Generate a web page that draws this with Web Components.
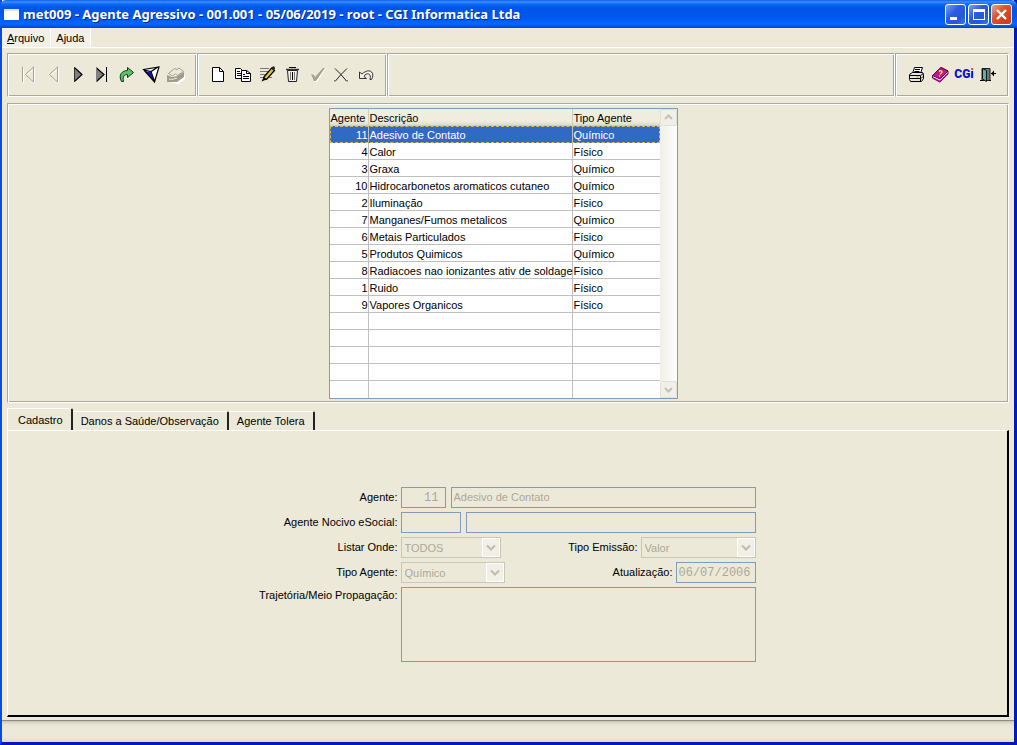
<!DOCTYPE html>
<html lang="pt-BR">
<head>
<meta charset="utf-8">
<title>met009 - Agente Agressivo</title>
<style>
  html, body { height: 100%; margin: 0; }
  body {
    font: 11px/16px "Liberation Sans", Arial, sans-serif;
    color: #000;
    --face: #ece9d8;
    --shade: #aca899;
    --edge: #7f9db9;
  }
</style>
</head>
<body>
<xp-window caption="met009 - Agente Agressivo - 001.001 - 05/06/2019 - root - CGI Informatica Ltda">
  <menu-bar></menu-bar>
  <tool-bar>
    <tool-group>
      <tool-button icon="first" label="Primeiro" off></tool-button>
      <tool-button icon="prev" label="Anterior" off></tool-button>
      <tool-button icon="next" label="Próximo"></tool-button>
      <tool-button icon="last" label="Último"></tool-button>
      <tool-button icon="go" label="Ir para"></tool-button>
      <tool-button icon="filter" label="Filtrar"></tool-button>
      <tool-button icon="stack" label="Limpar filtro" off></tool-button>
    </tool-group>
    <tool-group>
      <tool-button icon="new" label="Novo"></tool-button>
      <tool-button icon="copy" label="Copiar"></tool-button>
      <tool-button icon="edit" label="Editar"></tool-button>
      <tool-button icon="trash" label="Excluir"></tool-button>
      <tool-button icon="check" label="Confirmar" off></tool-button>
      <tool-button icon="cancel" label="Cancelar"></tool-button>
      <tool-button icon="undo" label="Desfazer"></tool-button>
    </tool-group>
    <tool-group class="fill"></tool-group>
    <tool-group class="end">
      <tool-button icon="print" label="Imprimir"></tool-button>
      <tool-button icon="book" label="Manual"></tool-button>
      <tool-button icon="cgi" label="CGi"></tool-button>
      <tool-button icon="exit" label="Sair"></tool-button>
    </tool-group>
  </tool-bar>
  <agent-grid></agent-grid>
  <tab-pages><agent-form></agent-form></tab-pages>
  <status-bar></status-bar>
</xp-window>

<script>
class View extends HTMLElement {
  constructor() {
    super();
    this.attachShadow({ mode: "open" });
  }
  connectedCallback() {
    this.shadowRoot.innerHTML = "<style>*{box-sizing:border-box}button,input,select,textarea{font:inherit;color:inherit;margin:0;border-radius:0}</style>" + this.view();
  }
}

customElements.define("xp-window", class extends View {
  view() {
    return `<style>
      :host { display: flex; flex-direction: column; min-height: 100%; box-sizing: border-box;
        background: var(--face); border: solid #0a4be0; border-width: 0 3px 3px 2px;
        border-color: #0a4be0 #0019b8 #0019b8 #0a4be0; }
      header { display: flex; align-items: center; gap: 2px; height: 28px; margin: 0 -3px 0 -2px; padding: 0 5px 0 4px;
        background: linear-gradient(#0f62ea 0, #3c8cff 2px, #0a6cf8 4px, #0055e5 8px, #0058ee 18px, #0368ff 24px, #0050d8 27px, #003fc4 28px);
        border-radius: 6px 6px 0 0; }
      .doc { width: 15px; height: 11px; flex: none; background: #fff; border-top: 2px solid #dbe8ff; }
      h1 { flex: 1; margin: 0 0 0 2px; font: bold 13px/20px "Noto Sans", sans-serif; color: #fff;
        text-shadow: 1px 1px #0a2a8c; white-space: nowrap; }
      button { width: 21px; height: 21px; padding: 0; border: 1px solid #fff; border-radius: 3px;
        background: linear-gradient(135deg, #7ba0f4, #2a5ddf 40%, #2456d8 70%, #3a75f0); }
      button.x { background: linear-gradient(135deg, #f0a48c, #e0512c 40%, #d0401c 80%); }
      svg { display: block; }
      main { flex: 1; display: flex; flex-direction: column; }
    </style>
    <header><span class="doc"></span><h1>${this.getAttribute("caption")}</h1>
      <button aria-label="Minimizar"><svg width="19" height="19"><path d="M4 12h7v3H4z" fill="#fff"/></svg></button>
      <button aria-label="Maximizar"><svg width="19" height="19"><path d="M4 4h12v11H4zM5 7v7h10V7z" fill="#fff" fill-rule="evenodd"/></svg></button>
      <button class="x" aria-label="Fechar"><svg width="19" height="19"><path d="M5 5l9 9M14 5l-9 9" stroke="#fff" stroke-width="2.4"/></svg></button>
    </header>
    <main><slot></slot></main>`;
  }
});

customElements.define("menu-bar", class extends View {
  view() {
    return `<style>
      :host { display: flex; height: 20px; box-sizing: border-box; border-bottom: 1px solid #fff; }
      button { padding: 0 6px 0 5px; border: 0; border-right: 1px solid #fff; line-height: 18px; background: #f3f1e6; }
    </style>
    <button><u>A</u>rquivo</button><button>Ajuda</button>`;
  }
});

customElements.define("tool-bar", class extends View {
  view() {
    return `<style>
      :host { display: flex; height: 44px; margin: 5px 5px 0 5px; }
      ::slotted(.fill) { flex: 1; width: auto; }
      ::slotted(.end) { width: 114px; }
    </style><slot></slot>`;
  }
});

customElements.define("tool-group", class extends View {
  view() {
    return `<style>
      :host { display: flex; justify-content: space-between; align-items: center; width: 190px; box-sizing: border-box;
        padding: 0 9px 2px; border: 1px solid; border-color: var(--shade) #fff #fff var(--shade);
        box-shadow: inset 1px 1px #fff, inset -1px -1px var(--shade); }
    </style><slot></slot>`;
  }
});

const ghost = d => `<path d="${d}" fill="none" stroke="#fff" transform="translate(1 1)"/><path d="${d}" fill="none" stroke="#a5a292"/>`;
const ICONS = {
  first: ghost("M4.500 3v15M15.500 3v15L7.500 10.500z"),
  prev: ghost("M14.500 3v15L6.500 10.500z"),
  next: `<path d="M7.500 3.500v14l7-7z" fill="#808080"/><path d="M7.500 3v15" stroke="#333"/><path d="M8 4l7 6.500L8 17" fill="none" stroke="#000" stroke-width="1.200"/>`,
  last: `<path d="M4.500 3.500v14l7-7z" fill="#808080"/><path d="M4.500 4l7.500 6.500-7.500 7" fill="none" stroke="#000" stroke-width="1.200"/><path d="M4.500 3v15" stroke="#808080"/><path d="M14.500 3v15" stroke="#000"/>`,
  go: `<path d="M4.500 17.500C1 11 5 6.500 10.500 6.500V3.500l6 5-6 5V10.500C7 10.500 5.500 12.500 6.500 17.500z" fill="#5fc06a" stroke="#0b3a1c"/>`,
  filter: `<path d="M2.500 6L18 3l-4.500 15z" fill="#fff"/><path d="M3 7l7 1 3 9z" fill="#1414c8"/><path d="M11 8l5-3-3 10z" fill="#fff"/><path d="M2.500 5.500L18 3l-4.500 15zM3 6l7 1.500 7-4.500M10 7.500l3.500 10" fill="none" stroke="#000" stroke-width="1.200"/>`,
  stack: `<path d="M2 12l5-4 11 2v4l-6 5-10-2z" fill="#fff" transform="translate(1 1)"/><path d="M1 11l5 2 5-1 7-4v5l-7 5H1z" fill="#a09d8e"/><path d="M2.500 9.500l6-5 2.500 1 2-1.500 4.500 3.500-6 4-2-1.500-3 2z" fill="#ebe8da" stroke="#a09d8e"/><path d="M3 15c3 1 5 0 8-1" fill="none" stroke="#ece9d8"/>`,
  new: `<path d="M4.500 3.500h7l4 4v10h-11z" fill="#fff" stroke="#000"/><path d="M11.500 3.500v4h4" fill="none" stroke="#000"/>`,
  copy: `<path d="M2.500 4.500h5l3 3v7h-8z" fill="#fff" stroke="#000"/><path d="M4 7.500h3M4 9.500h4M4 11.500h4" stroke="#000"/><path d="M8.500 6.500h5l4 3v8h-9z" fill="#fff" stroke="#000"/><path d="M13.500 6.500v3h4M10 10.500h2M10 12.500h6M10 14.500h6" fill="none" stroke="#000"/>`,
  edit: `<path d="M3 4.500h9M3 7.500h8M3 10.500h7M3 13.500h5M10 13.500h5" stroke="#777"/><path d="M6.500 13.500l8-9.500 3 2.500-8 9z" fill="#d8c820" stroke="#000" stroke-width="1.200"/><path d="M6.500 13.500l-2 4 5-2z" fill="#000"/><path d="M14.500 4l1-1.500h2l.5 2-1 2z" fill="#222"/>`,
  trash: `<path d="M5.500 6.500h10l-1 11h-8z" fill="#f4f2e8" stroke="#222"/><path d="M4 5.500h13" stroke="#333" stroke-width="1.500"/><path d="M7 3.500h7" stroke="#000"/><path d="M8.500 8v8M12.500 8v8" stroke="#777"/><path d="M10.500 8v8" stroke="#000"/>`,
  check: `<path d="M4 10l3 1 1 2 8-10h2L9 17H7z" fill="#fff" transform="translate(1 1)"/><path d="M4 10l3 1 1 2 8-9h2L9 17H7z" fill="#a5a292"/>`,
  cancel: `<path d="M4 4.500l5 5 7 8M16 4.500l-6 6-6 7" fill="none" stroke="#222"/><path d="M14 16.500h3M3 16.500h2" stroke="#777"/>`,
  undo: `<path d="M3.500 8v6.500h7L8 12.500C10 8 16 9 14 15.500h1.500C19.500 9 14 3 6 10z" fill="#f4f2e8" stroke="#333"/>`,
  print: `<path d="M6.500 9.500l2-6h8l-2 6" fill="#fff" stroke="#000"/><path d="M9 5.500h5M8.500 7.500h5" stroke="#000"/><path d="M3.500 10.500l3-2h10l1 2v4l-2 3h-11l-1-2z" fill="#e8e6da" stroke="#000"/><path d="M3.500 11.500h11l3-2M4 14.500h11l2-2M14.500 12v5" fill="none" stroke="#000"/><path d="M10 13h3" stroke="#d0b000"/>`,
  book: `<path d="M2.500 11.500L11 3.500l7 3.500v3l-8 8-7.500-4z" fill="#fff" stroke="#500048"/><path d="M2.500 11.500L11 3.500l7 3.500-8 8z" fill="#c01890" stroke="#600050"/><path d="M3 14l7 3.500 8-8" fill="none" stroke="#a01078" stroke-width="1.500"/><path d="M9 7.500c2-2 4 0 2 2l-1 .5M9 12h1" fill="none" stroke="#ffd820" stroke-width="1.500"/>`,
  exit: `<path d="M4 4.500h8v12H4z" fill="#777" stroke="#222"/><path d="M4.500 4.500l4 2v11l-4-2.500z" fill="#50b8a8" stroke="#111"/><path d="M2 16.500h3M11 16.500h2M13 9.500h5" stroke="#000"/><path d="M13 9.500l3-3v6z"/>`
};

customElements.define("tool-button", class extends View {
  view() {
    const icon = this.getAttribute("icon"), label = this.getAttribute("label");
    const face = icon === "cgi" ? "<b>CG<i>i</i></b>" : `<svg width="20" height="20" viewBox="0 0 20 20">${ICONS[icon]}</svg>`;
    return `<style>
      :host { display: block; }
      button { display: grid; place-items: center; width: 22px; height: 22px; padding: 0; border: 0; background: none; }
      b { font: 900 12px/20px Roboto, sans-serif; color: #0a14d0; }
      i { font-style: normal; background: linear-gradient(#e03020 4px, #0a14d0 4px); background-clip: text; color: transparent; }
      svg { display: block; }
    </style><button aria-label="${label}" ${this.hasAttribute("off") ? "disabled" : ""}>${face}</button>`;
  }
});

const AGENTS = [
  [11, "Adesivo de Contato", "Químico"], [4, "Calor", "Físico"], [3, "Graxa", "Químico"],
  [10, "Hidrocarbonetos aromaticos cutaneo", "Químico"], [2, "Iluminação", "Físico"],
  [7, "Manganes/Fumos metalicos", "Químico"], [6, "Metais Particulados", "Físico"],
  [5, "Produtos Quimicos", "Químico"], [8, "Radiacoes nao ionizantes ativ de soldage", "Físico"],
  [1, "Ruido", "Físico"], [9, "Vapores Organicos", "Físico"],
  ...Array(5).fill(["", "", ""])
];

customElements.define("agent-grid", class extends View {
  view() {
    const rows = AGENTS.map((r, i) => `<tr${i ? "" : ' class="on"'}>${r.map(c => `<td>${c}</td>`).join("")}</tr>`).join("");
    return `<style>
      :host { display: flex; justify-content: center; margin: 6px 5px 0 5px; padding: 4px 10px 3px 0;
        border: 1px solid; border-color: var(--shade) #fff #fff var(--shade);
        box-shadow: inset 1px 1px #fff, inset -1px -1px var(--shade); }
      .frame { display: flex; border: 1px solid var(--edge); background: #fff; }
      table { width: 330px; table-layout: fixed; border-spacing: 0; }
      .a { width: 39px; } .b { width: 204px; }
      th, td { height: 17px; padding: 2px 1px 0; font-weight: normal; line-height: 14px; text-align: left; white-space: nowrap;
        border: solid #c0c0c0; border-width: 0 1px 1px 0; }
      th { background: linear-gradient(#efedde 12px, #dedbc8); border-color: #d0cdba; }
      th:last-child, td:last-child { border-right: 0; }
      td:first-child { text-align: right; padding-right: 0; }
      tbody tr:last-child td { border-bottom: 0; }
      .on td { background: #316ac5; color: #fff; border-bottom-color: #316ac5; }
      .on { outline: 1px dashed #d8b850; outline-offset: -1px; }
      .bar { display: flex; flex-direction: column; justify-content: space-between; width: 17px; background: linear-gradient(90deg, #f0efe8, #fefefb); }
      .bar button { display: block; width: 17px; height: 17px; padding: 0; border: 1px solid #e2e0d4; border-radius: 2px; background: #f1f0e8; }
      svg { display: block; }
    </style>
    <div class="frame">
      <table><colgroup><col class="a"><col class="b"><col></colgroup>
        <thead><tr><th>Agente</th><th>Descrição</th><th>Tipo Agente</th></tr></thead>
        <tbody>${rows}</tbody></table>
      <div class="bar">
        <button disabled aria-label="Subir"><svg width="15" height="15"><path d="M4 9l3.500-3.500L11 9" fill="none" stroke="#c4c2b6" stroke-width="2"/></svg></button>
        <button disabled aria-label="Descer"><svg width="15" height="15"><path d="M4 6l3.500 3.500L11 6" fill="none" stroke="#c4c2b6" stroke-width="2"/></svg></button>
      </div>
    </div>`;
  }
});

customElements.define("tab-pages", class extends View {
  view() {
    return `<style>
      :host { flex: 1; display: flex; flex-direction: column; margin: 5px 5px 3px 5px; }
      nav { display: flex; align-items: flex-end; height: 22px; }
      button { height: 19px; padding: 0 8px; border: solid; border-width: 1px 2px 0 0; border-color: #fff #222 #fff #fff;
        border-radius: 0 2px 0 0; background: var(--face); line-height: 18px; }
      button.on { height: 22px; padding: 0 8px 0 10px; border-left-width: 1px; line-height: 22px; }
      section { flex: 1; padding: 56px 0 0; border: solid; border-width: 1px 2px 2px 1px; border-color: #fff #000 #000 #fff; }
    </style>
    <nav role="tablist"><button role="tab" class="on" aria-selected="true">Cadastro</button><button role="tab">Danos a Saúde/Observação</button><button role="tab">Agente Tolera</button></nav>
    <section role="tabpanel"><slot></slot></section>`;
  }
});

customElements.define("agent-form", class extends View {
  view() {
    const pick = (id, value, cls) => `<span class="pick ${cls}"><select id="${id}" disabled><option>${value}</option></select><svg width="18" height="19" aria-hidden="true"><path d="M.5.5h17v18H.5z" fill="#f1efe6" stroke="#fff"/><path d="M5 7.500l4 4 4-4" fill="none" stroke="#bfbcae" stroke-width="2"/></svg></span>`;
    return `<style>
      :host { display: block; }
      form { display: grid; grid-template-columns: 138px 355px; gap: 4px 3px; justify-content: center; }
      label { text-align: right; line-height: 21px; white-space: nowrap; }
      form > label { justify-self: end; }
      form > label.top { line-height: 16px; }
      div { display: flex; gap: 5px; }
      div label { flex: 1; margin-right: -2px; }
      input, textarea { min-width: 0; height: 21px; padding: 0 2px; border: 1px solid var(--edge); background: none; color: #aca899; }
      input:disabled, select:disabled { color: #aca899; opacity: 1; }
      input.rest { padding-bottom: 2px; }
      textarea { display: block; width: 100%; height: 75px; resize: none; }
      .mono { font: 12px/16px "Liberation Mono", monospace; }
      .num { width: 45px; padding-right: 6px; text-align: right; }
      .code { width: 60px; } .date { width: 80px; } .rest { flex: 1; }
      .pick { display: grid; grid-template-columns: 1fr 18px; align-items: center; height: 21px; border: 1px solid #c9c7ba; }
      select { grid-area: 1 / 1 / 2 / 3; width: 100%; height: 19px; padding: 0 3px; border: 0; background: none; appearance: none; }
      svg { grid-area: 1 / 2; display: block; }
      .w1 { width: 100px; } .w2 { width: 104px; } .w3 { width: 115px; }
    </style>
    <form>
      <label for="cod">Agente:</label>
      <div><input id="cod" class="mono num" value="11" disabled><input class="rest" aria-label="Descrição" value="Adesivo de Contato" disabled></div>
      <label for="esoc">Agente Nocivo eSocial:</label>
      <div><input id="esoc" class="code" disabled><input class="rest" aria-label="Descrição eSocial" disabled></div>
      <label for="onde">Listar Onde:</label>
      <div>${pick("onde", "TODOS", "w1")}<label for="emis">Tipo Emissão:</label>${pick("emis", "Valor", "w3")}</div>
      <label for="tipo">Tipo Agente:</label>
      <div>${pick("tipo", "Químico", "w2")}<label for="data">Atualização:</label><input id="data" class="mono date" value="06/07/2006" disabled></div>
      <label class="top" for="traj">Trajetória/Meio Propagação:</label>
      <textarea id="traj" disabled></textarea>
    </form>`;
  }
});

customElements.define("status-bar", class extends View {
  view() {
    return `<style>
      :host { display: block; height: 21px; border-top: 1px solid #8f8c7d;
        background: linear-gradient(#c9c6b6 0, #e6e3d2 3px, #ece9d8 6px, #ece9d8 17px, #e2d8c4 21px); }
    </style>`;
  }
});
</script>
</body>
</html>
